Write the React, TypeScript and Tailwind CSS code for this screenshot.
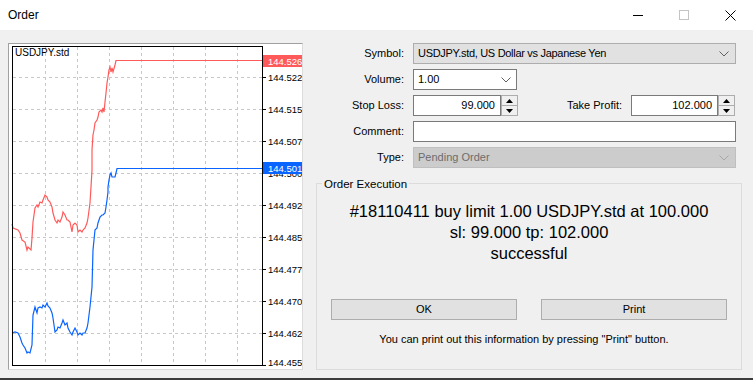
import React from 'react';

const RED = '#ff5a5a';
const BLUE = '#0a64ff';
const CHART_FONT = 'Liberation Sans, Arial, sans-serif';

const redPts =
  '12,224 13,228 18,230 20,233 22,240 25,242 27,250 28,247 31,250 32,238 33,222 35,208 37,205 38,207 40,202 42,203 43,200 45,195 47,197 48,200 50,202 52,207 53,213 55,220 57,223 58,220 60,222 62,217 63,212 65,215 67,220 68,220 70,222 72,232 73,225 75,223 77,225 78,232 80,230 82,232 83,230 85,228 87,223 88,218 90,203 91,187 92,170 92,150 93,135 94,130 95,123 97,120 98,117 99,112 101,110 102,112 103,108 104,112 105,102 106,93 107,83 108,77 109,70 110,67 111,72 112,68 113,72 115,65 116,60.5 262,60.5';

const bluePts =
  '12,333 15,332 18,333 20,337 22,343 23,345 25,348 27,353 28,352 30,353 32,345 33,315 35,307 37,313 38,308 40,307 42,308 43,305 45,307 47,303 48,306 50,308 52,313 53,318 55,332 57,330 58,327 60,328 62,323 63,320 65,325 67,323 68,328 70,332 72,335 73,332 75,328 77,332 78,335 80,333 82,335 83,333 85,333 87,328 88,323 90,307 92,287 93,250 95,230 97,228 98,223 100,217 102,215 103,215 105,213 106,207 107,200 108,192 108,187 109,180 110,175 111,173 112,177 115,177 116,173 117,168.5 262,168.5';

// [gridline y, text baseline y, value]
const levels: [number, number, string][] = [
  [77, 81, '144.522'],
  [109, 113, '144.515'],
  [141, 145, '144.507'],
  [173, 177, '144.500'],
  [205, 209, '144.492'],
  [237, 241, '144.485'],
  [269, 273, '144.477'],
  [301, 305, '144.470'],
  [333, 337, '144.462'],
  [365, 366, '144.455'],
];

const vGrid = [45, 77, 109, 141, 173, 205, 237];

function Chart() {
  return (
    <div className="h-[327px] w-[295px] border border-t-[#a0a0a0] border-l-[#a0a0a0] border-b-[#dcdcdc] border-r-[#dcdcdc] bg-white">
      <svg width="293" height="325" viewBox="9 44 293 325" className="block">
        {/* grid */}
        {vGrid.map((x) => (
          <line key={x} x1={x + 0.5} y1={47} x2={x + 0.5} y2={365} stroke="#c8c8c8" strokeDasharray="3 3" />
        ))}
        {levels.slice(0, 9).map(([y]) => (
          <line key={y} x1={13} y1={y + 0.5} x2={262} y2={y + 0.5} stroke="#c8c8c8" strokeDasharray="3 3" />
        ))}

        {/* bid / ask lines */}
        <polyline points={redPts} fill="none" stroke={RED} strokeWidth="1.2" />
        <polyline points={bluePts} fill="none" stroke={BLUE} strokeWidth="1.2" />

        {/* frame */}
        <rect x={12.5} y={46.5} width={250} height={319} fill="none" stroke="#000" />

        {/* axis ticks + labels */}
        {levels.map(([y, ty, v]) => (
          <g key={v}>
            <line x1={262} y1={y + 0.5} x2={266} y2={y + 0.5} stroke="#000" />
            <text x={268} y={ty} fontSize="9.5" fontFamily={CHART_FONT} fill="#000">
              {v}
            </text>
          </g>
        ))}

        <rect x={263} y={55} width={40} height={12} fill={RED} />
        <text x={268} y={64.5} fontSize="9.5" fontFamily={CHART_FONT} fill="#fff">
          144.526
        </text>
        <rect x={263} y={162} width={40} height={12} fill={BLUE} />
        <text x={268} y={171.5} fontSize="9.5" fontFamily={CHART_FONT} fill="#fff">
          144.501
        </text>

        <text x={15} y={56} fontSize="10" fontFamily={CHART_FONT} fill="#000">
          USDJPY.std
        </text>
      </svg>
    </div>
  );
}

function Chevron({ color = '#606060' }: { color?: string }) {
  return (
    <svg width="10" height="6" viewBox="0 0 10 6">
      <path d="M0.5 0.5 L5 5 L9.5 0.5" fill="none" stroke={color} strokeWidth="1" />
    </svg>
  );
}

function Spinner() {
  return (
    <div className="flex h-full w-[17px] flex-col border border-[#adadad] bg-[#f0f0f0]">
      <div className="flex flex-1 items-center justify-center border-b border-[#adadad]">
        <svg width="7" height="4" viewBox="0 0 7 4">
          <path d="M3.5 0 L7 4 L0 4Z" fill="#000" />
        </svg>
      </div>
      <div className="flex flex-1 items-center justify-center">
        <svg width="7" height="4" viewBox="0 0 7 4">
          <path d="M0 0 L7 0 L3.5 4Z" fill="#000" />
        </svg>
      </div>
    </div>
  );
}

function Row({ label, children }: { label: string; children: React.ReactNode }) {
  return (
    <div className="flex h-[21px] items-center">
      <div className="w-[101px] text-right">{label}</div>
      <div className="ml-[9px] flex h-full items-center">{children}</div>
    </div>
  );
}

export default function App() {
  return (
    <div className="flex h-[380px] w-[753px] flex-col overflow-hidden bg-[#f0f0f0] font-['Liberation_Sans',Arial,sans-serif] text-[11px] text-black">
      {/* title bar */}
      <div className="flex h-[30px] shrink-0 items-center bg-white">
        <span className="pl-[8px] text-[12px]">Order</span>
        <div className="ml-auto flex h-full">
          <div className="flex h-full w-[46px] items-center justify-center">
            <div className="h-px w-[10px] bg-black" />
          </div>
          <div className="flex h-full w-[46px] items-center justify-center">
            <div className="h-[10px] w-[10px] border border-[#c4c4c4]" />
          </div>
          <div className="flex h-full w-[46px] items-center justify-center">
            <svg width="11" height="11" viewBox="0 0 11 11">
              <path d="M0.5 0.5 L10.5 10.5 M10.5 0.5 L0.5 10.5" stroke="#000" strokeWidth="1" />
            </svg>
          </div>
        </div>
      </div>

      {/* body */}
      <div className="flex h-[348px] pl-[8px] pt-[13px]">
        <Chart />

        <div className="flex flex-1 flex-col">
          <div className="flex flex-col gap-[5px]">
            <Row label="Symbol:">
              <div className="flex h-full w-[323px] items-center justify-between border border-[#adadad] bg-[#e1e1e1] pl-[4px] pr-[6px]">
                <span className="tracking-[-0.3px]">USDJPY.std, US Dollar vs Japanese Yen</span>
                <Chevron />
              </div>
            </Row>
            <Row label="Volume:">
              <div className="flex h-full w-[104px] items-center justify-between border border-[#7a7a7a] bg-white pl-[4px] pr-[5px]">
                <span>1.00</span>
                <Chevron />
              </div>
            </Row>
            <Row label="Stop Loss:">
              <div className="flex h-full">
                <div className="flex h-full w-[88px] items-center justify-end border border-[#7a7a7a] bg-white pr-[5px]">
                  99.000
                </div>
                <Spinner />
              </div>
              <div className="w-[104px] text-right">Take Profit:</div>
              <div className="ml-[9px] flex h-full">
                <div className="flex h-full w-[87px] items-center justify-end border border-[#7a7a7a] bg-white pr-[5px]">
                  102.000
                </div>
                <Spinner />
              </div>
            </Row>
            <Row label="Comment:">
              <div className="h-full w-[323px] border border-[#7a7a7a] bg-white" />
            </Row>
            <Row label="Type:">
              <div className="flex h-full w-[323px] items-center justify-between border border-[#bfbfbf] bg-[#cccccc] pl-[4px] pr-[6px] text-[#6d6d6d]">
                <span>Pending Order</span>
                <Chevron color="#a8a8a8" />
              </div>
            </Row>
          </div>

          {/* order execution group */}
          <div className="relative ml-[13px] mr-[11px] mt-[15px] h-[187px] border border-[#dcdcdc]">
            <span className="absolute -top-[8px] left-[5px] bg-[#f0f0f0] px-[2px] text-[11.5px]">
              Order Execution
            </span>
            <div className="flex flex-col items-center pt-[17px] text-[16.5px] leading-[21px]">
              <div>#18110411 buy limit 1.00 USDJPY.std at 100.000</div>
              <div>sl: 99.000 tp: 102.000</div>
              <div>successful</div>
            </div>
            <div className="mt-[35px] flex justify-center gap-[24px]">
              <button className="h-[21px] w-[186px] border border-[#adadad] bg-[#e1e1e1] text-[11px]">OK</button>
              <button className="h-[21px] w-[186px] border border-[#adadad] bg-[#e1e1e1] text-[11px]">Print</button>
            </div>
            <div className="mt-[11px] pr-[10px] text-center">
              You can print out this information by pressing "Print" button.
            </div>
          </div>
        </div>
      </div>

      <div className="h-[2px] bg-[#3c3c3c]" />
    </div>
  );
}
